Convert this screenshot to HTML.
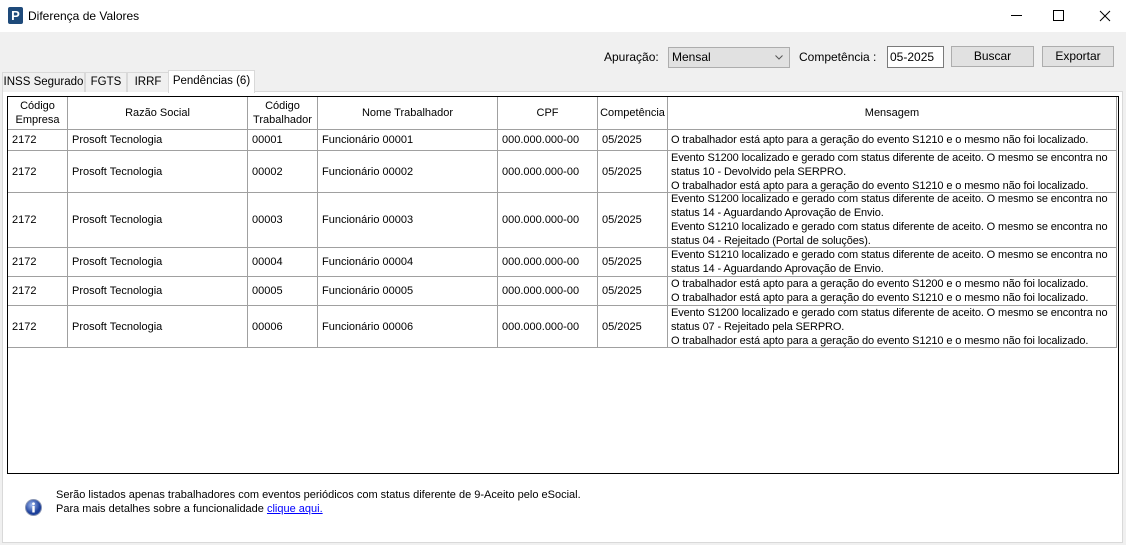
<!DOCTYPE html>
<html><head><meta charset="utf-8"><style>
*{margin:0;padding:0;box-sizing:border-box}
body{width:1126px;height:545px;background:#f0f0f0;font-family:"Liberation Sans",sans-serif;font-size:11px;color:#000;position:relative;overflow:hidden}
.a{position:absolute}
.title{left:0;top:0;width:1126px;height:32px;background:#fff}
.page{left:2px;top:91px;width:1121px;height:452px;background:#fff;border:1px solid #d9d9d9}
.grid{left:7px;top:96px;width:1112px;height:378px;border:1px solid #000;background:#fff}
.c{position:absolute;display:flex;align-items:center;padding-left:4px;white-space:nowrap;line-height:14px;border-right:1px solid #a0a0a0;border-bottom:1px solid #a0a0a0;overflow:hidden}
.m{letter-spacing:-0.12px;padding-left:3px}
.h{justify-content:center;text-align:center;padding-left:0}
.btn{background:#e1e1e1;border:1px solid #adadad;text-align:center;line-height:19px;font-size:12px}
.tab{top:72px;height:20px;line-height:19px;font-size:11.5px;border:1px solid #d9d9d9;border-bottom:none;text-align:center;background:#f0f0f0;white-space:nowrap}
</style></head><body>
<div class="a title"></div>
<div class="a" style="left:8px;top:7px;width:15px;height:17px;background:#1e4a7a;border-radius:2px;color:#fff;font-weight:bold;font-size:13px;line-height:17px;text-align:center">P</div>
<div class="a" style="left:28px;top:9px;font-size:12px">Diferença de Valores</div>
<div class="a" style="left:1011px;top:15px;width:11px;height:1px;background:#000"></div>
<div class="a" style="left:1053px;top:10px;width:11px;height:11px;border:1px solid #000"></div>
<svg class="a" style="left:1099px;top:10px" width="12" height="12"><path d="M1 1L11 11M11 1L1 11" stroke="#000" stroke-width="1"/></svg>

<div class="a" style="left:604px;top:50px;font-size:12px">Apuração:</div>
<div class="a" style="left:668px;top:47px;width:122px;height:21px;background:#e1e1e1;border:1px solid #adadad;font-size:12px;line-height:19px;padding-left:3px">Mensal<svg style="position:absolute;right:6px;top:7px" width="8" height="5"><path d="M0.5 0.5L4 4L7.5 0.5" stroke="#555" fill="none"/></svg></div>
<div class="a" style="left:799px;top:50px;font-size:12px">Competência :</div>
<div class="a" style="left:887px;top:46px;width:57px;height:22px;background:#fff;border:1px solid #7a7a7a;font-size:12px;line-height:20px;padding-left:2px">05-2025</div>
<div class="a btn" style="left:951px;top:46px;width:83px;height:21px">Buscar</div>
<div class="a btn" style="left:1042px;top:46px;width:72px;height:21px">Exportar</div>

<div class="a page"></div>
<div class="a tab" style="left:2px;width:83px">INSS Segurado</div>
<div class="a tab" style="left:85px;width:42px">FGTS</div>
<div class="a tab" style="left:127px;width:42px">IRRF</div>
<div class="a tab" style="left:168px;top:70px;height:23px;width:87px;background:#fff;line-height:21px">Pendências (6)</div>

<div class="a grid"></div>
<div id="t"></div>
<script>
var xs=[8,68,248,318,498,598,668,1117];
var ys=[97,130,151,193,248,277,306,348];
var hd=["Código<br>Empresa","Razão Social","Código<br>Trabalhador","Nome Trabalhador","CPF","Competência","Mensagem"];
var A="O trabalhador está apto para a geração do evento S1210 e o mesmo não foi localizado.";
var B="O trabalhador está apto para a geração do evento S1200 e o mesmo não foi localizado.";
var E0="Evento S1200 localizado e gerado com status diferente de aceito. O mesmo se encontra no";
var E1="Evento S1210 localizado e gerado com status diferente de aceito. O mesmo se encontra no";
var msgs=[A,
E0+"<br>status 10 - Devolvido pela SERPRO.<br>"+A,
E0+"<br>status 14 - Aguardando Aprovação de Envio.<br>"+E1+"<br>status 04 - Rejeitado (Portal de soluções).",
E1+"<br>status 14 - Aguardando Aprovação de Envio.",
B+"<br>"+A,
E0+"<br>status 07 - Rejeitado pela SERPRO.<br>"+A];
var h="";
function cell(r,c,txt,cls){h+='<div class="c '+cls+'" style="left:'+xs[c]+'px;top:'+ys[r]+'px;width:'+(xs[c+1]-xs[c])+'px;height:'+(ys[r+1]-ys[r])+'px">'+txt+'</div>';}
for(var c=0;c<7;c++)cell(0,c,hd[c],"h");
for(var r=0;r<6;r++){var n="0000"+(r+1);
var v=["2172","Prosoft Tecnologia",n,"Funcionário "+n,"000.000.000-00","05/2025","<div>"+msgs[r]+"</div>"];
for(var c=0;c<7;c++)cell(r+1,c,v[c],c==6?"m":"");}
document.getElementById("t").innerHTML=h;
</script>

<svg class="a" style="left:25px;top:499px" width="17" height="17" viewBox="0 0 17 17"><defs><radialGradient id="g" cx="40%" cy="35%"><stop offset="0" stop-color="#9db8ef"/><stop offset="1" stop-color="#1c3f9a"/></radialGradient></defs><circle cx="8.5" cy="8.5" r="8" fill="url(#g)" stroke="#8a96b4"/><circle cx="8.5" cy="4.8" r="1.4" fill="#fff"/><rect x="7.3" y="7" width="2.4" height="6.5" fill="#fff"/></svg>
<div class="a" style="left:56px;top:488px;line-height:14px">Serão listados apenas trabalhadores com eventos periódicos com status diferente de 9-Aceito pelo eSocial.<br>Para mais detalhes sobre a funcionalidade <span style="color:#0000ff;text-decoration:underline">clique aqui.</span></div>
</body></html>
